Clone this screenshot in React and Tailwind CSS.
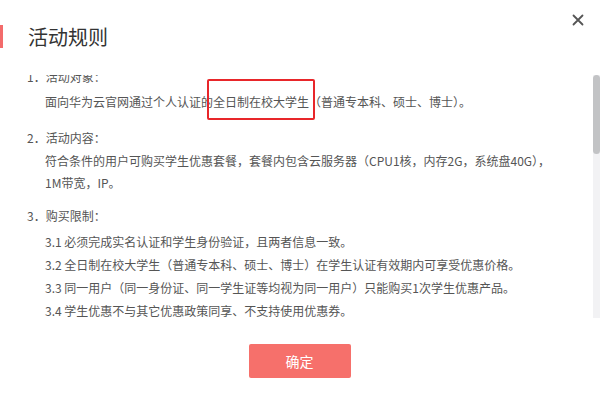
import React from 'react'

const font = { fontFamily: '"Noto Sans CJK SC", "Liberation Sans", sans-serif' }

// 活动规则弹窗
export default function App() {
  return (
    <div className="relative w-[600px] h-[401px] overflow-hidden bg-white" style={font}>
      {/* Header */}
      <div className="flex items-center h-[23px] mt-[25px]">
        <div className="w-[3px] h-full bg-[#f36b6b]" />
        <h2 className="ml-[25px] text-[20px] leading-[23px] text-[#333]">活动规则</h2>
      </div>
      <button className="absolute right-[16px] top-[14px] w-[12px] h-[12px] flex items-center justify-center">
        <svg viewBox="0 0 12 12" width="12" height="12">
          <path d="M1.5 1.5 L10.5 10.5 M10.5 1.5 L1.5 10.5" stroke="#555" strokeWidth="1.8" strokeLinecap="round" />
        </svg>
      </button>

      {/* Body (scrolled) */}
      <div className="flex h-[243px] mt-[27px]">
        <div className="flex-1 overflow-hidden">
          <div className="-mt-[9px] pl-[27px] text-[12px] text-[#555] whitespace-nowrap">
            <p className="leading-[22px]">1．活动对象：</p>
            <p className="leading-[22px] mt-[3px] pl-[18px]">
              面向华为云官网通过个人认证的
              <span className="relative">
                全日制在校大学生
                <span className="absolute -left-[6px] -right-[6px] -top-[14px] -bottom-[10px] border-2 border-[#e8262a] rounded-[2px]" />
              </span>
              （普通专本科、硕士、博士）。
            </p>

            <p className="leading-[22px] mt-[14px]">2．活动内容：</p>
            <p className="leading-[22px] mt-[1px] pl-[18px]">
              符合条件的用户可购买学生优惠套餐，套餐内包含云服务器（CPU1核，内存2G，系统盘40G），
              <br />
              1M带宽，IP。
            </p>

            <p className="leading-[22px] mt-[11px]">3．购买限制：</p>
            <div className="mt-[3px] pl-[18px] leading-[23px]">
              <p>3.1 必须完成实名认证和学生身份验证，且两者信息一致。</p>
              <p>3.2 全日制在校大学生（普通专本科、硕士、博士）在学生认证有效期内可享受优惠价格。</p>
              <p>3.3 同一用户（同一身份证、同一学生证等均视为同一用户）只能购买1次学生优惠产品。</p>
              <p>3.4 学生优惠不与其它优惠政策同享、不支持使用优惠券。</p>
            </div>
          </div>
        </div>
        {/* Scrollbar */}
        <div className="w-[7px] bg-[#f2f2f4]">
          <div className="h-[79px] rounded-[4px] bg-[#c2c3c5]" />
        </div>
      </div>

      {/* Footer */}
      <div className="flex justify-center mt-[26px] pr-[1px]">
        <button className="w-[102px] h-[34px] rounded-[2px] bg-[#f6706b] text-white text-[14px]">确定</button>
      </div>
    </div>
  )
}
